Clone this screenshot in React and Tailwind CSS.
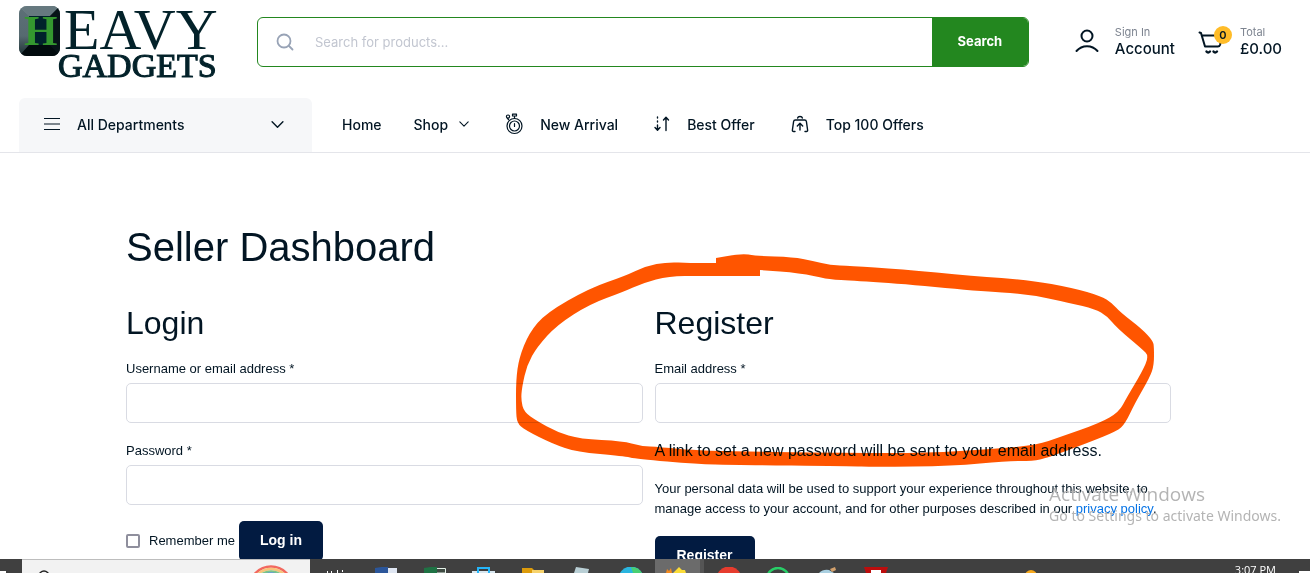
import React from "react";

const OUTER = [
  [716, 258], [740, 253], [757, 256], [793, 257], [813, 261], [830, 265], [850, 266], [900, 269], [973, 276],
  [1030, 280], [1073, 288], [1101, 296], [1112, 303], [1120, 312], [1142, 329], [1153, 341], [1154, 347],
  [1154, 365], [1150, 377], [1135, 403], [1125, 424], [1117, 431], [1090, 442], [1047, 458], [1033, 461],
  [1007, 461], [953, 466], [873, 467], [850, 466], [733, 465], [697, 464], [637, 459], [623, 456], [577, 452],
  [553, 444], [525, 430], [517, 423], [516, 410], [516, 380], [519, 358], [529, 333], [546, 313], [590, 288],
  [625, 276], [646, 266], [667, 262], [690, 263], [716, 263],
];
const INNER = [
  [760, 276], [700, 276], [669, 276], [643, 283], [623, 292], [590, 304], [557, 325], [537, 347], [527, 365],
  [522, 387], [521, 400], [524, 412], [537, 421], [557, 432], [580, 439], [623, 441], [640, 446], [660, 447],
  [700, 451], [850, 453], [927, 453], [993, 449], [1037, 445], [1060, 437], [1100, 423], [1119, 412],
  [1127, 397], [1142, 372], [1149, 356], [1142, 349], [1117, 328], [1107, 316], [1095, 309], [1070, 303],
  [1027, 294], [977, 291], [893, 283], [840, 280], [827, 279], [800, 273], [760, 270],
];

function smooth(points) {
  let d = `M${points[0].join(" ")}`;
  for (let i = 1; i < points.length - 1; i++) {
    const [x, y] = points[i];
    const [nx, ny] = points[i + 1];
    d += `Q${x} ${y} ${(x + nx) / 2} ${(y + ny) / 2}`;
  }
  return `${d}L${points[points.length - 1].join(" ")}Z`;
}

function Logo() {
  return (
    <svg width="200" height="76" viewBox="0 0 200 76" role="img" aria-label="Heavy Gadgets" className="overflow-visible">
      <defs>
        <linearGradient id="tile" x1="0" y1="0" x2="1" y2="1">
          <stop offset="0" stopColor="#8d9da2" />
          <stop offset="0.45" stopColor="#3c5157" />
          <stop offset="1" stopColor="#00080b" />
        </linearGradient>
        <linearGradient id="fade" x1="0" y1="0" x2="0" y2="1">
          <stop offset="0" stopColor="#5d7077" />
          <stop offset="0.6" stopColor="#566a70" />
          <stop offset="1" stopColor="#1b2d32" />
        </linearGradient>
        <clipPath id="tileClip"><rect width="41" height="50" rx="8" /></clipPath>
      </defs>
      <g clipPath="url(#tileClip)">
        <rect width="41" height="50" fill="url(#tile)" />
        <path d="M0 0L10 10V39L0 50Z" fill="url(#fade)" />
        <path d="M0 0H41L31 10H10Z" fill="#66797f" />
        <path d="M41 0V50L31 39V10Z" fill="#071418" />
        <path d="M0 50L10 39H31L41 50Z" fill="#020b0e" />
        <rect x="10" y="10" width="21" height="29" fill="#00222b" />
      </g>
      <text x="5" y="39" fontSize="43" fontWeight="700" fill="#34982f" className="font-['Liberation_Serif',serif]">H</text>
      <text x="45" y="43" fontSize="58" fill="#03222a" className="font-['Liberation_Serif',serif]">EAVY</text>
      <text x="39" y="71" fontSize="34" fill="#03222a" stroke="#03222a" strokeWidth="1.1" className="font-['Liberation_Serif',serif]">GADGETS</text>
    </svg>
  );
}

const stroke = { fill: "none", stroke: "currentColor", strokeLinecap: "round", strokeLinejoin: "round" };

function Stopwatch() {
  return (
    <svg width="18" height="22" viewBox="0 0 18 22" {...stroke} strokeWidth="1.2">
      <circle cx="9.5" cy="13" r="7.5" /><circle cx="9.5" cy="13" r="5" />
      <path d="M9.5 10.5V13.5M9.5 5.5V3M7.5 1.2H11.5V3H7.5ZM3.5 6.5L2.5 5.5" />
      <circle cx="3" cy="3.6" r="1.6" />
    </svg>
  );
}
function Arrows() {
  return (
    <svg width="16" height="16" viewBox="0 0 16 16" {...stroke} strokeWidth="1.4">
      <path d="M3.5 1V2M3.5 5V6M3.5 9V14M1 11.5L3.5 14.2L6 11.5M12 14.5V1.5M9.5 4L12 1.3L14.5 4" />
    </svg>
  );
}
function BagUp() {
  return (
    <svg width="18" height="18" viewBox="0 0 18 18" {...stroke} strokeWidth="1.4">
      <path d="M4 16.5H2.6Q1.2 16.5 1.4 15L2.6 6.5Q2.8 5 4.4 5H13.6Q15.2 5 15.4 6.5L16.6 15Q16.8 16.5 15.4 16.5H14M6.6 3Q7 1.5 9 1.5T11.4 3M9 15V8.5M6.3 11L9 8.3L11.7 11" />
    </svg>
  );
}
function Chevron({ size }) {
  return (
    <svg width={size} height={size} viewBox="0 0 12 12" {...stroke} strokeWidth="1.3">
      <path d="M1 3.5L6 8.5L11 3.5" />
    </svg>
  );
}

function Field({ id, label, type }) {
  return (
    <div>
      <label htmlFor={id} className="block text-[13px] leading-5">{label} *</label>
      <input id={id} type={type} className="mt-1 block h-10 w-full rounded-[5px] border border-[#d9dbe3] bg-white px-3 outline-none" />
    </div>
  );
}

const taskIcons = [
  ["Word", <><path d="M14 1H24V6H14Z" fill="#dfe6f2" /><path d="M2 1L15 -1V6H2Z" fill="#2b569a" /></>],
  ["Excel", <><path d="M14 1.500H23.500V6H14Z" fill="#3e4a42" stroke="#e4f0e8" /><path d="M2 1L15 -1V6H2Z" fill="#1f7244" /></>],
  ["Store", <><path d="M1 4H24V6H1Z" fill="#d7e6ef" /><path d="M7 6V1H18V6" fill="none" stroke="#25b6fa" strokeWidth="2" /></>],
  ["Files", <><path d="M2 1H12L14 3V6H2Z" fill="#dc9b0b" /><path d="M12 3H24V6H12Z" fill="#f7d36c" /></>],
  ["Notepad", <path d="M7 0L20 2L19 6H5Z" fill="#b9cfd5" />],
  ["Edge", <><circle cx="13" cy="12" r="12.500" fill="#2ab5df" /><path d="M13 0Q21 0 24 6H15Z" fill="#49cf72" /></>],
  ["Editor", <><path d="M1 6L2 2L4 4L6 1L7 6Z" fill="#f58a1d" /><path d="M8 6L14 0L17 3L20 3L21 6Z" fill="#fbdc38" /></>],
  ["Browser", <circle cx="13" cy="12" r="12.500" fill="#e63c2e" />],
  ["Chat", <circle cx="13" cy="12" r="11" fill="none" stroke="#28cf68" strokeWidth="2.500" />],
  ["Paint", <><path d="M5 6Q9 2 15 3L20 6Z" fill="#a9cfe0" /><path d="M16 2L21 0L22 3L18 5Z" fill="#d2a06c" /></>],
  ["Reader", <><path d="M1 0H25L23 6H3Z" fill="#bd0d0d" /><path d="M8 3H18V6H8Z" fill="#fff" /></>],
];

function Taskbar() {
  return (
    <footer className="flex h-[14px] shrink-0 overflow-hidden bg-[#404040] text-white">
      <button aria-label="Start" className="flex w-[22px] shrink-0 items-end"><span className="h-[2px] w-[6px] bg-white" /></button>
      <div className="flex w-72 shrink-0 items-start justify-between border-t border-[#bdbdbd] bg-[#f2f2f2] pl-4 pr-4">
        <svg width="14" height="14" viewBox="0 0 14 14" fill="none" stroke="#222" strokeWidth="1.4"><circle cx="6" cy="16" r="5" /></svg>
        <svg width="46" height="13" viewBox="0 0 46 13" fill="none" strokeWidth="2.5">
          <circle cx="23" cy="28" r="21.500" stroke="#f2695f" /><circle cx="23" cy="28" r="19" stroke="#f8c37a" />
          <circle cx="23" cy="28" r="16.500" stroke="#7cc487" /><circle cx="23" cy="28" r="14.500" fill="#5a93e6" stroke="#5a93e6" />
        </svg>
      </div>
      <button aria-label="Task view" className="flex w-[51px] shrink-0 items-end justify-center">
        <svg width="18" height="3" viewBox="0 0 18 3" fill="#fff"><path d="M0 1H1V3H0ZM4 1H5V3H4ZM10 0H11V3H10ZM15 0H16V2H15Z" /></svg>
      </button>
      {taskIcons.map(([name, art]) => (
        <button key={name} aria-label={name} className={name === "Editor" ? "flex w-[49px] shrink-0 items-end justify-center border-r-4 border-[#555555] bg-[#6b6b6b]" : "flex w-[49px] shrink-0 items-end justify-center"}>
          <svg width="26" height="6" viewBox="0 0 26 6">{art}</svg>
        </button>
      ))}
      <div className="flex flex-1 items-start justify-end">
        <svg className="mr-[198px] self-end" width="12" height="3" viewBox="0 0 12 3"><circle cx="6" cy="6" r="6" fill="#f7a91d" /></svg>
        <time className="mt-[3px] mr-[23px] text-[11px] leading-4 whitespace-nowrap font-['Open_Sans',sans-serif]">3:07 PM</time>
        <span className="h-[2px] w-[11px] self-end bg-white" />
      </div>
    </footer>
  );
}

export default function App() {
  return (
    <div className="relative flex h-screen flex-col overflow-hidden bg-white font-['Inter',sans-serif] text-[#021523]">
      <header className="shrink-0 border-b border-[#e4e5ea]">
        <div className="flex h-[98px] items-start pl-[19px] pr-7">
          <a href="#home" className="mt-[6px] shrink-0"><Logo /></a>
          <form role="search" className="mt-[17px] ml-[38px] flex h-[50px] min-w-0 flex-1 items-center overflow-hidden rounded-md border border-[#23871f]">
            <svg className="ml-[18px] shrink-0 text-[#98a3b6]" width="18" height="18" viewBox="0 0 18 18" {...stroke} strokeWidth="1.8">
              <circle cx="8" cy="8" r="6.500" /><path d="M13 13L16.500 16.500" />
            </svg>
            <input aria-label="Search for products" placeholder="Search for products..." className="h-full min-w-0 flex-1 px-[21px] text-[13px] outline-none placeholder:text-[#c2c6d0]" />
            <button type="button" className="h-full w-24 shrink-0 bg-[#23871f] text-[13px] font-bold text-white">Search</button>
          </form>
          <a href="#account" className="mt-6 ml-[46px] flex shrink-0 items-center gap-4">
            <svg width="24" height="24" viewBox="0 0 24 24" {...stroke} strokeWidth="2">
              <circle cx="12" cy="7" r="5.500" /><path d="M1.500 22C7 15.500 17 15.500 22.500 22" />
            </svg>
            <span><span className="block text-[11px] leading-4 text-[#7d8490]">Sign In</span><span className="block text-[15px] leading-[18px] font-medium">Account</span></span>
          </a>
          <a href="#cart" className="mt-6 ml-[23px] flex shrink-0 items-center gap-2">
            <span className="relative block h-6 w-[34px]">
              <svg className="mt-[2px]" width="25" height="24" viewBox="0 0 25 24" {...stroke} strokeWidth="2">
                <path d="M1.500 1.500L3 2L7 15.500H20Q21.500 15.500 22 14L24 6M4 4.500H17" />
                <path d="M8.500 20.500Q10 22.500 12 20.500M15.500 20.500Q17 22.500 19 20.500" strokeWidth="2.400" />
              </svg>
              <span className="absolute -top-[3px] right-0 flex size-[18px] items-center justify-center rounded-full bg-[#ffbc28] text-[11px] font-semibold">0</span>
            </span>
            <span><span className="block text-[11px] leading-4 text-[#7d8490]">Total</span><span className="block text-[15px] leading-[18px] font-medium">£0.00</span></span>
          </a>
        </div>
        <nav className="flex h-[54px] pl-[19px] text-[14px] font-medium">
          <button className="flex h-full w-[293px] shrink-0 items-center rounded-t-md bg-[#f6f7f9] pl-[25px] pr-7 pb-[2px]">
            <svg width="16" height="14" viewBox="0 0 16 14" {...stroke} strokeWidth="1.2"><path d="M.5 1.500H15.500M.5 7H15.500M.5 12.500H15.500" /></svg>
            <span className="ml-[17px] flex-1 text-left">All Departments</span>
            <Chevron size={13} />
          </button>
          <div className="flex items-center gap-9 pb-[2px] pl-[30px]">
            <div className="flex gap-8">
              <a href="#home">Home</a>
              <a href="#shop" className="flex items-center gap-[11px]">Shop<Chevron size={10} /></a>
            </div>
            <a href="#new" className="flex items-center gap-[17px]"><Stopwatch />New Arrival</a>
            <a href="#best" className="flex items-center gap-[17px]"><Arrows />Best Offer</a>
            <a href="#top" className="flex items-center gap-[17px]"><BagUp />Top 100 Offers</a>
          </div>
        </nav>
      </header>

      <main className="min-h-0 flex-1 overflow-hidden px-[126px] pt-[70px] font-['Liberation_Sans',sans-serif]">
        <h1 className="text-[40px] leading-[48px]">Seller Dashboard</h1>
        <div className="mt-8 grid grid-cols-2 gap-3 pr-[13px]">
          <section>
            <h2 className="text-[32px] leading-10">Login</h2>
            <form className="mt-4">
              <Field id="user" label="Username or email address" type="text" />
              <div className="mt-[18px]"><Field id="pass" label="Password" type="password" /></div>
              <div className="mt-4 flex items-center gap-1">
                <label className="flex items-center gap-[9px] text-[13px]">
                  <input type="checkbox" className="size-[14px] appearance-none rounded-[2px] border-2 border-[#8f8f9d] bg-white" />
                  Remember me
                </label>
                <button type="button" className="h-10 w-[84px] rounded-[5px] bg-[#021b41] pb-[2px] text-[14px] font-bold text-white">Log in</button>
              </div>
            </form>
          </section>
          <section>
            <h2 className="text-[32px] leading-10">Register</h2>
            <form className="mt-4">
              <Field id="email" label="Email address" type="email" />
              <p className="mt-4 text-[16px] leading-6">A link to set a new password will be sent to your email address.</p>
              <p className="mt-4 text-[13px] leading-5">Your personal data will be used to support your experience throughout this website, to manage access to your account, and for other purposes described in our <a href="#privacy" className="text-[#0573e6]">privacy policy</a>.</p>
              <button type="button" className="mt-[17px] h-10 w-[100px] rounded-[5px] bg-[#021b41] pb-[2px] text-[14px] font-bold text-white">Register</button>
            </form>
          </section>
        </div>
      </main>

      <Taskbar />

      <svg className="pointer-events-none absolute top-0 left-0 mix-blend-multiply" width="1310" height="480" viewBox="0 0 1310 480" aria-hidden="true">
        <path d={smooth(OUTER) + smooth(INNER)} fill="#ff5500" fillRule="evenodd" />
      </svg>
      <div className="pointer-events-none absolute right-[29px] bottom-[47px] text-[#b4b4b4]">
        <p className="text-[19px] leading-6 font-['Open_Sans',sans-serif]">Activate Windows</p>
        <p className="text-[14px] leading-5 font-['Noto_Sans',sans-serif]">Go to Settings to activate Windows.</p>
      </div>
    </div>
  );
}
